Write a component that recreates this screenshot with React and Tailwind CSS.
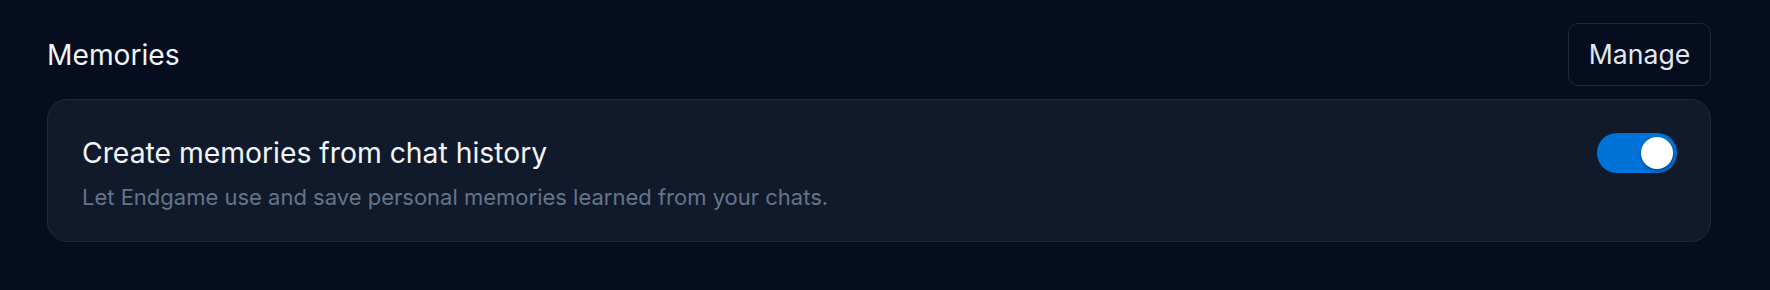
import { useState } from 'react';

export default function App() {
  const [enabled, setEnabled] = useState(true);

  return (
    <div
      className="min-h-[290px] w-full bg-[#060d1e] pl-[47px] pr-[59px] pt-[23px]"
      style={{ fontFamily: 'Inter, "Noto Sans", sans-serif' }}
    >
      {/* Header */}
      <div className="flex items-center justify-between">
        <h2 className="text-[28.2px] leading-[36px] font-normal text-[#f1f5f9]">Memories</h2>
        <button className="h-[63px] w-[143px] rounded-[10px] border border-[#1e293b] text-[26.6px] text-[#e2e8f0]">
          Manage
        </button>
      </div>

      {/* Setting card */}
      <div className="mt-[13px] flex items-start justify-between rounded-[20px] border border-[#1e293b] bg-[#111a2b] pl-[34px] pr-[33px] pt-[35px] pb-[30px]">
        <div>
          <div className="text-[28.3px] leading-[36px] text-[#f1f5f9]">Create memories from chat history</div>
          <div className="mt-[12px] text-[22px] leading-[28px] text-[#64748b]">
            Let Endgame use and save personal memories learned from your chats.
          </div>
        </div>
        <button
          onClick={() => setEnabled(!enabled)}
          className={`mt-[-2px] flex h-[40px] w-[80px] items-center rounded-full p-[4px] ${enabled ? 'justify-end bg-[#0073d9]' : 'justify-start bg-[#334155]'}`}
        >
          <span className="h-[32px] w-[32px] rounded-full bg-white shadow-[0_2px_4px_rgba(0,0,0,0.35)]" />
        </button>
      </div>
    </div>
  );
}
